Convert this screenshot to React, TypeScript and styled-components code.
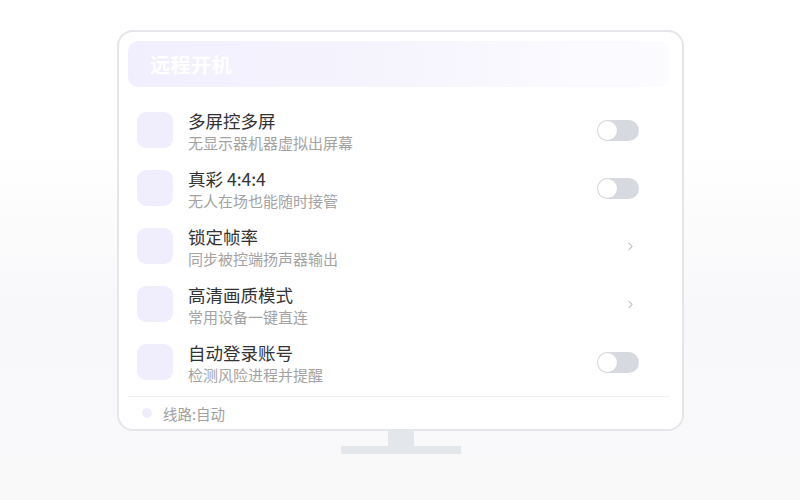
import React from 'react';
import styled, { createGlobalStyle } from 'styled-components';
import { ChevronRight } from 'lucide-react';

const GlobalStyle = createGlobalStyle`
  html, body {
    margin: 0;
    padding: 0;
  }
  body {
    width: 800px;
    height: 500px;
    overflow: hidden;
    background: linear-gradient(180deg, #ffffff 0%, #ffffff 30%, #f8f8fa 60%, #f9f9fa 100%);
    font-family: 'Inter', 'Noto Sans CJK SC', sans-serif;
  }
`;

const Stage = styled.div`
  display: flex;
  flex-direction: column;
  align-items: center;
  padding-top: 30px;
  padding-left: 1px;
`;

const Screen = styled.div`
  width: 567px;
  box-sizing: border-box;
  border: 2px solid #e4e6ea;
  border-radius: 16px;
  background: #ffffff;
  padding: 9px 12px 0 9px;
  display: flex;
  flex-direction: column;
`;

const Header = styled.div`
  height: 46px;
  border-radius: 10px;
  background: linear-gradient(90deg, #f1effd 0%, #f6f5fe 50%, #fcfcff 100%);
  display: flex;
  align-items: center;
  padding-left: 22px;
  margin-bottom: 14px;
`;

const HeaderTitle = styled.span`
  font-family: 'Noto Sans CJK SC', sans-serif;
  font-size: 20px;
  font-weight: 700;
  color: #ffffff;
  letter-spacing: 0.5px;
`;

const List = styled.div`
  display: flex;
  flex-direction: column;
  padding-bottom: 5px;
  border-bottom: 1px solid #eef0f2;
`;

const Row = styled.div`
  height: 58px;
  display: flex;
  align-items: center;
  padding: 0 31px 0 9px;
`;

const IconTile = styled.div`
  width: 36px;
  height: 36px;
  border-radius: 9px;
  background: #f0eefd;
  flex-shrink: 0;
`;

const Texts = styled.div`
  flex: 1;
  display: flex;
  flex-direction: column;
  margin-left: 15px;
  margin-top: 3px;
`;

const Title = styled.span`
  font-family: 'Noto Sans CJK SC', sans-serif;
  font-size: 17.5px;
  line-height: 22px;
  color: #333333;
`;

const Subtitle = styled.span`
  font-family: 'Noto Sans CJK SC', sans-serif;
  font-size: 15px;
  line-height: 22px;
  color: #a3a3a3;
`;

const Track = styled.div<{ $on: boolean }>`
  width: 42px;
  height: 21px;
  border-radius: 11px;
  background: ${(p) => (p.$on ? '#8b7cf6' : '#d6d9df')};
  display: flex;
  align-items: center;
  justify-content: ${(p) => (p.$on ? 'flex-end' : 'flex-start')};
  padding: 0 1px;
  box-sizing: border-box;
`;

const Knob = styled.div`
  width: 19px;
  height: 19px;
  border-radius: 50%;
  background: #ffffff;
  box-shadow: 0 0 0 0.5px #d0d3d9;
`;

const Chevron = styled.div`
  display: flex;
  align-items: center;
  color: #8e9096;
  margin-right: 2px;
`;

const Footer = styled.div`
  height: 32px;
  display: flex;
  align-items: center;
  padding-left: 14px;
  gap: 11px;
`;

const Dot = styled.span`
  width: 10px;
  height: 10px;
  border-radius: 50%;
  background: #efedfd;
`;

const FooterText = styled.span`
  font-family: 'Noto Sans CJK SC', sans-serif;
  font-size: 14.5px;
  color: #a0a0a0;
`;

const Neck = styled.div`
  width: 26px;
  height: 15px;
  background: #e3e6ea;
`;

const Base = styled.div`
  width: 120px;
  height: 8px;
  background: #e3e6ea;
`;

type Item = { title: string; sub: string; kind: 'toggle' | 'link' };

const items: Item[] = [
  { title: '多屏控多屏', sub: '无显示器机器虚拟出屏幕', kind: 'toggle' },
  { title: '真彩 4:4:4', sub: '无人在场也能随时接管', kind: 'toggle' },
  { title: '锁定帧率', sub: '同步被控端扬声器输出', kind: 'link' },
  { title: '高清画质模式', sub: '常用设备一键直连', kind: 'link' },
  { title: '自动登录账号', sub: '检测风险进程并提醒', kind: 'toggle' },
];

const App = () => {
  return (
    <>
      <GlobalStyle />
      <Stage>
        <Screen>
          <Header>
            <HeaderTitle>远程开机</HeaderTitle>
          </Header>
          <List>
            {items.map((item) => (
              <Row key={item.title}>
                <IconTile />
                <Texts>
                  <Title>{item.title}</Title>
                  <Subtitle>{item.sub}</Subtitle>
                </Texts>
                {item.kind === 'toggle' ? (
                  <Track $on={false}>
                    <Knob />
                  </Track>
                ) : (
                  <Chevron>
                    <ChevronRight size={13} strokeWidth={1.6} />
                  </Chevron>
                )}
              </Row>
            ))}
          </List>
          <Footer>
            <Dot />
            <FooterText>线路:自动</FooterText>
          </Footer>
        </Screen>
        <Neck />
        <Base />
      </Stage>
    </>
  );
};

export default App;
